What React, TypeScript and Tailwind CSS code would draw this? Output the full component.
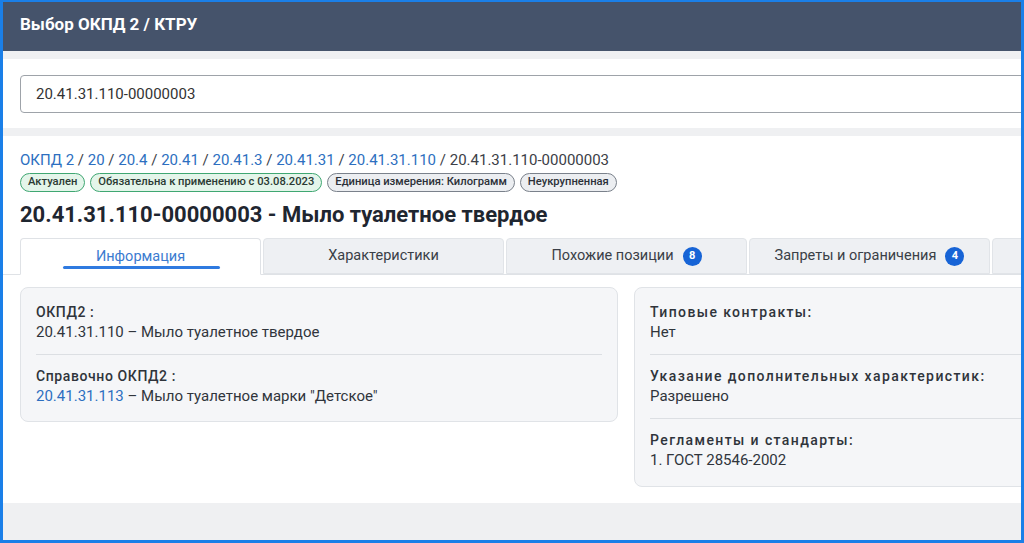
import React from "react";

const crumbs = ["ОКПД 2", "20", "20.4", "20.41", "20.41.3", "20.41.31", "20.41.31.110"];

function Tab({ label, active, badge }: { label: string; active?: boolean; badge?: string }) {
  return (
    <div
      className={
        "relative w-[241px] h-[36px] shrink-0 flex items-center justify-center gap-[9px] rounded-t-[4px] border text-[14.5px] " +
        (active
          ? "bg-white border-[#dfe2e6] border-b-white text-[#3b7bd0] -mb-px h-[37px]"
          : "bg-[#eef0f3] border-[#e1e4e8] text-[#3a3f47]")
      }
    >
      <span>{label}</span>
      {badge && (
        <span className="w-[19px] h-[19px] rounded-full bg-[#1764d6] text-white text-[11px] font-bold flex items-center justify-center">
          {badge}
        </span>
      )}
      {active && <span className="absolute left-[42px] right-[40px] bottom-[5px] h-[3px] rounded-full bg-[#2f7ae0]" />}
    </div>
  );
}

function Field({ label, children, last, mono }: { label: string; children: React.ReactNode; last?: boolean; mono?: boolean }) {
  return (
    <div className={"pt-[11px] pb-[11px] " + (last ? "" : "border-b border-[#dcdfe3]")}>
      <div className={"text-[14px] font-medium text-[#2f343b] leading-[20px] " + (mono ? "tracking-[1.4px]" : "tracking-[0.6px]")}>{label}</div>
      <div className="text-[15px] text-[#30353c] leading-[21px]">{children}</div>
    </div>
  );
}

const green = "h-[19px] px-[7px] flex items-center rounded-full border border-[#3fa772] bg-[#e4f5ea] text-[11.2px] font-medium text-[#2b3a33]";
const gray = "h-[19px] px-[7px] flex items-center rounded-full border border-[#7a818b] bg-[#eceef1] text-[11.2px] font-medium text-[#2b3038]";

export default function App() {
  return (
    <div
      className="w-[1024px] h-[543px] overflow-hidden border-[3px] border-t-2 border-[#1a7fe8] bg-[#eff0f2]"
      style={{ fontFamily: "Roboto, 'Noto Sans', sans-serif" }}
    >
      <div className="w-[1260px]">
        <div className="h-[49px] bg-[#45536b] flex items-center pl-[17px] pb-[4px]">
          <span className="text-white text-[17px] font-bold">Выбор ОКПД 2 / КТРУ</span>
        </div>
        <div className="h-[8px]" />
        <div className="bg-white pt-[16px] pb-[15px] pl-[17px]">
          <div className="w-[1220px] h-[38px] border border-[#9ea3a9] rounded-[4px] flex items-center pl-[15px] text-[15px] text-[#333]">
            20.41.31.110-00000003
          </div>
        </div>
        <div className="h-[8px]" />
        <div className="bg-white pt-[15px] pb-[16px]">
          <div className="pl-[17px]">
            <div className="text-[15px] leading-[18px] text-[#3c4047]">
              {crumbs.map((c) => (
                <React.Fragment key={c}>
                  <span className="text-[#2d6fc0]">{c}</span>
                  <span> / </span>
                </React.Fragment>
              ))}
              <span>20.41.31.110-00000003</span>
            </div>
            <div className="flex gap-[5px] mt-[4px]">
              <span className={green}>Актуален</span>
              <span className={green}>Обязательна к применению с 03.08.2023</span>
              <span className={gray}>Единица измерения: Килограмм</span>
              <span className={gray}>Неукрупненная</span>
            </div>
            <div className="mt-[9px] text-[22px] font-bold text-[#1f2630] leading-[28px]">
              20.41.31.110-00000003 - Мыло туалетное твердое
            </div>
          </div>
          <div className="mt-[9px] border-b border-[#dfe2e6] pl-[17px] flex items-end gap-[2px]">
            <Tab label="Информация" active />
            <Tab label="Характеристики" />
            <Tab label="Похожие позиции" badge="8" />
            <Tab label="Запреты и ограничения" badge="4" />
            <Tab label="" />
          </div>
          <div className="pl-[17px] pt-[12px] flex items-start gap-[16px]">
            <div className="w-[598px] bg-[#f5f6f8] border border-[#e0e3e7] rounded-[8px] px-[15px] pt-[3px] pb-[3px]">
              <Field label="ОКПД2 :">20.41.31.110 – Мыло туалетное твердое</Field>
              <Field label="Справочно  ОКПД2 :" last>
                <span className="text-[#2d6fc0]">20.41.31.113</span> – Мыло туалетное марки "Детское"
              </Field>
            </div>
            <div className="w-[598px] bg-[#f5f6f8] border border-[#e0e3e7] rounded-[8px] px-[15px] pt-[3px] pb-[4px]">
              <Field label="Типовые контракты:" mono>Нет</Field>
              <Field label="Указание дополнительных характеристик:" mono>Разрешено</Field>
              <Field label="Регламенты и стандарты:" mono last>1. ГОСТ 28546-2002</Field>
            </div>
          </div>
        </div>
      </div>
    </div>
  );
}
